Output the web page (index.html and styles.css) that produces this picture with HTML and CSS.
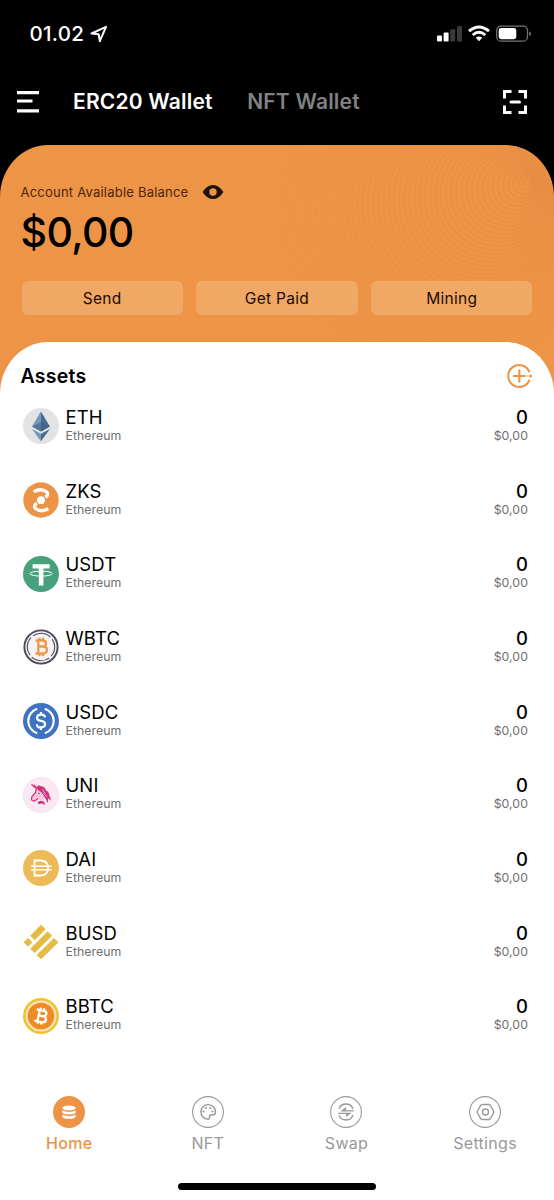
FILE: index.html
```html
<!DOCTYPE html>
<html lang="en">
<head>
<meta charset="utf-8">
<title>ERC20 Wallet</title>
<link rel="stylesheet" href="styles.css">
</head>
<body>
<div class="app">
  <header class="status">
    <div class="clock"><span>01.02</span>
      <svg class="loc" width="18" height="18" viewBox="0 0 18 18"><path d="M1.500 8.500 16 1.800 9.800 16.200 8.700 9.300Z" fill="none" stroke="#fff" stroke-width="2" stroke-linejoin="round"/></svg>
    </div>
    <svg class="signals" width="95" height="18" viewBox="0 0 95 18">
      <g fill="#fff"><rect x="0" y="10.500" width="5" height="6" rx="1"/><rect x="6.600" y="7.500" width="5" height="9" rx="1"/></g>
      <g fill="#3a3a3a"><rect x="13.200" y="4.300" width="5" height="12.200" rx="1"/><rect x="20" y="1" width="5" height="15.500" rx="1"/></g>
      <g fill="none" stroke="#fff" stroke-width="2.900"><path d="M32 6.200Q42 -2.300 52 6.200"/><path d="M35.700 10Q42 4.600 48.300 10"/></g>
      <path d="M38.800 12.700Q42 10.100 45.200 12.700L42 16.300Z" fill="#fff"/>
      <rect x="59.700" y="1.100" width="30.800" height="15" rx="4.200" fill="none" stroke="#777" stroke-width="1.200"/>
      <rect x="61.700" y="3" width="17.600" height="11.200" rx="2.400" fill="#fff"/>
      <path d="M92.200 6.500v4.600Q94 10.500 94 8.800T92.200 6.500" fill="#777"/>
    </svg>
  </header>
  <nav class="top">
    <svg width="22" height="24" viewBox="0 0 22 24" stroke="#fff" stroke-width="3.200"><path d="M0 2.600h22M0 11h15.500M0 20.900h22"/></svg>
    <span class="tab on">ERC20 Wallet</span>
    <span class="tab">NFT Wallet</span>
    <svg class="scan" width="24" height="24" viewBox="0 0 24 24" fill="none" stroke="#fff" stroke-width="3"><path d="M1.500 8.500V1.500H8.500M15.500 1.500h7v7M22.500 15.500v7h-7M8.500 22.500h-7v-7"/><path d="M8 12h8.500" stroke-linecap="round"/></svg>
  </nav>
  <main class="hero">
    <svg class="rings" id="rings" width="554" height="250" viewBox="0 0 554 250"></svg>
    <section class="balance">
      <div class="caption"><span>Account Available Balance</span>
        <svg width="22" height="16" viewBox="0 0 22 16"><path fill-rule="evenodd" fill="#1c140c" d="M.6 8Q5 .9 11 .9T21.400 8Q17 15.100 11 15.100T.6 8ZM11 4.300a3.700 3.700 0 1 0 0 7.400a3.700 3.700 0 1 0 0-7.400Z"/></svg>
      </div>
      <div class="amount">$0,00</div>
      <div class="actions"><button>Send</button><button>Get Paid</button><button>Mining</button></div>
    </section>
    <section class="sheet">
      <div class="heading"><h2>Assets</h2>
        <svg width="26" height="26" viewBox="0 0 26 26" fill="none" stroke="#ed9345" stroke-width="2.100"><path d="M22.500 9.100A11 11 0 1 0 22.500 16.900"/><path d="M12.300 6.600v12.800M5.900 13h12.800"/><circle cx="23.600" cy="13" r="1.500" fill="#ed9345" stroke="none"/><path d="M20.700 13h.1" stroke-width="1.400" stroke-linecap="round"/></svg>
      </div>
      <ul class="assets">
        <li><svg class="coin" viewBox="0 0 36 36"><circle cx="18" cy="18" r="18" fill="#e2e3e5"/><path d="M17.900 3.500 9 18.600l8.900 5z" fill="#7697b5"/><path d="M17.900 3.500v20.100l9-5z" fill="#486c91"/><path d="M17.900 14.500 9 18.600l8.900 5z" fill="#527799"/><path d="M17.900 14.500v9.100l9-5z" fill="#40658a"/><path d="m9 21 8.900 12.300v-7.500z" fill="#7697b5"/><path d="m26.900 21-9 12.300v-7.500z" fill="#486c91"/></svg>
          <div class="name"><b>ETH</b><small>Ethereum</small></div><div class="value"><b>0</b><small>$0,00</small></div></li>
        <li><svg class="coin" viewBox="0 0 36 36"><circle cx="18" cy="18" r="17.700" fill="#ed9345"/><circle cx="18" cy="18.200" r="3.900" fill="#fff"/><path d="M10.800 9.800Q18 5.700 23.800 10Q26 12.200 22.600 15.500M25.400 26.800Q18.200 30.800 12.400 26.500Q10.200 24.200 13.600 21" fill="none" stroke="#fff" stroke-width="3.300"/></svg>
          <div class="name"><b>ZKS</b><small>Ethereum</small></div><div class="value"><b>0</b><small>$0,00</small></div></li>
        <li><svg class="coin" viewBox="0 0 36 36"><circle cx="18" cy="18" r="18" fill="#46a17c"/><path d="M9.600 8.200h17v4.400h-6.200V29.600h-4.600V12.600H9.600z" fill="#fff"/><ellipse cx="18.100" cy="17.600" rx="11.200" ry="2.500" fill="none" stroke="#fff" stroke-width="1"/></svg>
          <div class="name"><b>USDT</b><small>Ethereum</small></div><div class="value"><b>0</b><small>$0,00</small></div></li>
        <li><svg class="coin" viewBox="0 0 36 36"><circle cx="18" cy="18" r="16.600" fill="#f5f3f5" stroke="#4e4a58" stroke-width="1.900"/><circle cx="18" cy="18" r="13.700" fill="none" stroke="#4e4a58" stroke-width="1.100" stroke-dasharray="19 2.520" stroke-dashoffset="9"/><path d="M12.500 11.500h7.200Q23 11.500 23 14.400T19.700 17.500H15.300h4.800q3.800 0 3.800 3.400T19.700 24.500H12.500M15.300 11.500v13M16.500 8.800v3M20 8.800v3M16.500 24.300v3M20 24.300v3" fill="none" stroke="#ed9a48" stroke-width="2.300"/></svg>
          <div class="name"><b>WBTC</b><small>Ethereum</small></div><div class="value"><b>0</b><small>$0,00</small></div></li>
        <li><svg class="coin" viewBox="0 0 36 36"><circle cx="18" cy="18" r="18" fill="#3e73c4"/><g fill="none" stroke="#fff" stroke-width="2.200"><path d="M14.200 5.800a12.800 12.800 0 0 0 0 24.400M21.800 5.800a12.800 12.800 0 0 1 0 24.400"/><path d="M22 14.300Q21.700 11.600 18 11.600T14.100 14.500T18 17.900T22.100 21.200T18 24.400T13.900 21.300M18 9v2.600M18 24.400V27"/></g></svg>
          <div class="name"><b>USDC</b><small>Ethereum</small></div><div class="value"><b>0</b><small>$0,00</small></div></li>
        <li><svg class="coin" viewBox="0 0 36 36"><circle cx="18" cy="18" r="17.600" fill="#fce8f2" stroke="#eddce6" stroke-width=".7"/><path d="M13.500 11 18 10.500 22.500 14 21 20.500 19 24 16 22 12.500 24.500 8.800 23.500 9.200 20 12 16Z" fill="#f9c6de"/><g fill="none" stroke="#ce327d" stroke-width="1.200" stroke-linejoin="round"><path d="M8.500 7.500 13.400 11.500 12.500 15.500 8.700 20.200 8.600 23 11 24.300 13 23 15 21.600"/><path d="M10.500 7.800 14 10.600 17.500 10.200"/></g><path d="M15 8.200 18.500 9.300Q22.300 10.200 23 13.600Q26.300 15 26.300 18.500Q28.300 20.600 27.500 24Q26.700 22 25 21.300Q25.700 24.200 24.300 26Q23.800 22.500 21.800 20.800Q20.600 18.600 19.700 17Q18.300 14.700 15.800 13.800L13.800 11.500Z" fill="#ce327d"/><path d="M19.500 12.500 22.300 16.500M20.500 16.500 24.300 20" stroke="#fce8f2" stroke-width=".7"/><path d="M14.800 15.500 17.300 16.300 16 17.500Z" fill="#ce327d"/><path d="M14.500 25.500Q17 22.500 20.500 24.500Q22.500 26 21.700 28.300Q20 25.600 17 26.700L15.800 27.300Z" fill="#ce327d"/></svg>
          <div class="name"><b>UNI</b><small>Ethereum</small></div><div class="value"><b>0</b><small>$0,00</small></div></li>
        <li><svg class="coin" viewBox="0 0 36 36"><circle cx="18" cy="18" r="18" fill="#ecbb58"/><g fill="none" stroke="#fff" stroke-width="1.800"><path d="M11.500 10.500h6q7.500 0 7.500 7.500t-7.500 7.500h-6z"/><path d="M8.300 16.200h20.200M8.300 19.700h20.200" stroke-width="1.500"/></g></svg>
          <div class="name"><b>DAI</b><small>Ethereum</small></div><div class="value"><b>0</b><small>$0,00</small></div></li>
        <li><svg class="coin" viewBox="0 0 36 36" fill="#e5bc43"><path d="m18.100.8 4.500 4.500L11.600 16.200 7.200 11.700zM24.700 7.300l4.400 4.400L11.700 29.100 7.300 24.700zM31 13.900l4.500 4.400L18.100 35.300 13.700 31zM5 13.900l4.400 4.400L5 22.700.6 18.300z"/></svg>
          <div class="name"><b>BUSD</b><small>Ethereum</small></div><div class="value"><b>0</b><small>$0,00</small></div></li>
        <li><svg class="coin" viewBox="0 0 36 36"><circle cx="18" cy="18" r="16.700" fill="#fae3c3" stroke="#edc52c" stroke-width="2.600"/><circle cx="18" cy="18" r="13.300" fill="#ef8b24"/><path transform="rotate(12 18 18)" d="M12.500 12.300h7.300q3 0 3 2.700t-3.200 2.800h-3.900 4.700q3.200 0 3.200 3t-3.800 3.100h-7.300M15.600 12.300v11.600M16.300 9.800v2.700M19.800 9.800v2.700M16.300 23.700v2.700M19.800 23.700v2.700" fill="none" stroke="#fff" stroke-width="2.300"/></svg>
          <div class="name"><b>BBTC</b><small>Ethereum</small></div><div class="value"><b>0</b><small>$0,00</small></div></li>
      </ul>
      <nav class="bottom">
        <a class="active"><svg viewBox="0 0 32 32"><circle cx="16" cy="16" r="16" fill="#ed9345"/><g fill="#fff"><ellipse cx="16" cy="12" rx="6.700" ry="2.600"/><path d="M9.300 14.500q6.700 2.800 13.400 0v1.800q-.5 2.200-6.700 2.200t-6.700-2.200zM9.300 18.800q6.700 2.800 13.400 0v1.700q-.5 2.300-6.700 2.300t-6.700-2.300z"/></g></svg><span>Home</span></a>
        <a><svg viewBox="0 0 32 32" fill="none" stroke="#999" stroke-width="1.100"><circle cx="16" cy="16" r="15.400"/><path stroke-width="1.400" d="M16 23.200A7.300 7.300 0 1 1 23.500 16q0 3-3 3h-1.800q-1.600.2-1.200 2 .3 2.300-1.500 2.200Z"/><g fill="#999" stroke="none"><circle cx="11.500" cy="15.500" r="1.100"/><circle cx="14" cy="12" r="1.100"/><circle cx="18.200" cy="12" r="1.100"/><circle cx="20.500" cy="15.500" r="1.100"/></g></svg><span>NFT</span></a>
        <a><svg viewBox="0 0 32 32" fill="none" stroke="#999" stroke-width="1.100"><circle cx="16" cy="16" r="15.400"/><g stroke-width="1.300"><path d="M9 13a7.400 7.400 0 0 1 14 0M23 19a7.400 7.400 0 0 1-14 0"/><path d="M23.700 14.800H12.200l3.200-2.400v2.300M8.300 17.300h11.500l-3.200 2.400v-2.300"/></g></svg><span>Swap</span></a>
        <a><svg viewBox="0 0 32 32" fill="none" stroke="#999" stroke-width="1.100"><circle cx="16" cy="16" r="15.400"/><g stroke-width="1.400"><path d="M13 8.500h7l1.200.7 3.300 5.700v2.200l-3.300 5.700-1.200.7h-7l-1.200-.7-3.300-5.700v-2.200l3.300-5.700z"/><circle cx="16.500" cy="16" r="3"/></g></svg><span>Settings</span></a>
      </nav>
      <div class="indicator"></div>
    </section>
  </main>
</div>
<script src="rings.js"></script>
</body>
</html>
```
FILE: styles.css
```css
* { box-sizing: border-box; }
body { margin: 0; background: #000; font-family: Inter, "Liberation Sans", sans-serif; color: #000; }
.app { width: 554px; height: 1200px; display: flex; flex-direction: column; overflow: hidden; }
.status { height: 67px; padding: 0 22px 0 29.500px; display: flex; align-items: center; justify-content: space-between; color: #fff; }
.clock { display: flex; align-items: center; gap: 6px; font-size: 20.500px; font-weight: 500; letter-spacing: .3px; }
.top { height: 78px; padding: 0 27px 8px 17px; display: flex; align-items: center; color: #fff; }
.tab { font-size: 21px; line-height: 24px; padding-bottom: 1px; font-weight: 600; letter-spacing: .2px; color: #828282; margin-left: 34.500px; white-space: nowrap; }
.tab.on { color: #fff; margin-left: 34px; }
.scan { margin-left: auto; }
.hero { flex: 1; display: flex; flex-direction: column; position: relative; background: #ee9447; border-radius: 48px 48px 0 0 / 52px 52px 0 0; overflow: hidden; }
.rings { position: absolute; top: 0; left: 0; }
.balance { height: 197px; padding: 36px 21.500px 0; position: relative; }
.caption { display: flex; align-items: center; gap: 14px; height: 21px; font-size: 13px; letter-spacing: .22px; color: #4c2508; margin-left: -1px; }
.amount { font-size: 41px; line-height: 50px; font-weight: 500; letter-spacing: -.6px; margin-top: 5px; margin-left: -1px; }
.actions { display: grid; grid-template-columns: repeat(3, 1fr); gap: 13.500px; margin-top: 24px; }
.actions button { height: 34px; border: 0; padding: 0; border-radius: 6px; background: #f2a865; font: 400 15.500px Inter, sans-serif; letter-spacing: .3px; color: #160b00; }
.sheet { flex: 1; position: relative; background: #fff; border-radius: 48px 48px 0 0 / 52px 52px 0 0; display: flex; flex-direction: column; }
.heading { height: 47.500px; padding: 21px 21px 0 20.500px; display: flex; align-items: center; justify-content: space-between; }
h2 { margin: 0; font-size: 19.500px; font-weight: 600; letter-spacing: .25px; }
.assets { list-style: none; margin: 0; padding: 0 26px 0 23px; }
.assets li { height: 73.700px; display: flex; align-items: center; }
.coin { width: 36px; height: 36px; flex: none; }
.name, .value { display: flex; flex-direction: column; padding-bottom: 1px; }
.name { margin-left: 6.500px; }
.value { margin-left: auto; text-align: right; }
.assets b { font-size: 18.500px; line-height: 19px; font-weight: 500; }
.name b { font-weight: 400; letter-spacing: .1px; }
.assets small { font-size: 12.300px; line-height: 17px; letter-spacing: .05px; color: #6f6f6f; }
.bottom { display: grid; grid-template-columns: repeat(4, 138.600px); margin-top: 43px; }
.bottom a { display: flex; flex-direction: column; align-items: center; gap: 5px; color: #999; font-size: 16px; line-height: 20px; letter-spacing: .3px; }
.bottom svg { width: 32px; height: 32px; }
.bottom .active { color: #ed9345; font-weight: 500; }
.indicator { width: 198px; height: 7px; border-radius: 4px; background: #000; margin: auto auto 10.500px; }
```
FILE: rings.js
```js
// Concentric ripples that fade out away from the card's upper right corner.
const rings = document.getElementById("rings");
for (let i = 1; i < 50; i++) {
  const c = document.createElementNS("http://www.w3.org/2000/svg", "circle");
  c.setAttribute("cx", 529 - i * 1.9);
  c.setAttribute("cy", 37 + i * 0.7);
  c.setAttribute("r", i * 3.3);
  c.setAttribute("fill", "none");
  c.setAttribute("stroke", "#c87832");
  c.setAttribute("stroke-width", "1.5");
  c.setAttribute("opacity", Math.max(0, 0.2 - i * 0.0038));
  rings.appendChild(c);
}
```
